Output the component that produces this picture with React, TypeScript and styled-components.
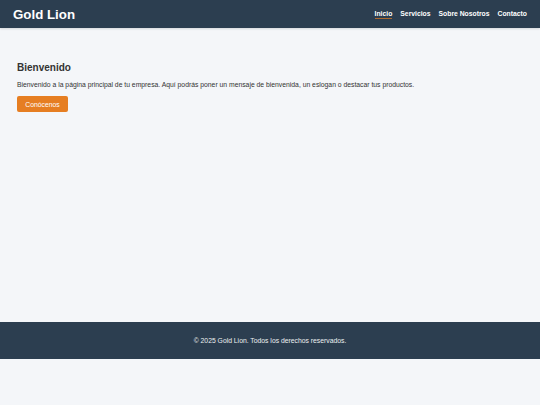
import { createGlobalStyle } from 'styled-components'
import styled from 'styled-components'

const GlobalStyle = createGlobalStyle`
  * {
    box-sizing: border-box;
  }
  body {
    margin: 0;
    background: #f4f6f9;
    font-family: 'Liberation Sans', Arial, sans-serif;
    color: #333;
  }
`

const links = ['Inicio', 'Servicios', 'Sobre Nosotros', 'Contacto']

const App = () => {
  return (
    <>
      <GlobalStyle />
      <Header>
        <Logo>Gold Lion</Logo>
        <Nav>
          {links.map((l, i) => (
            <NavLink key={l} href="#" $active={i === 0}>{l}</NavLink>
          ))}
        </Nav>
      </Header>
      <Main>
        <Title>Bienvenido</Title>
        <Text>
          Bienvenido a la página principal de tu empresa. Aquí podrás poner un mensaje de bienvenida, un eslogan o destacar tus productos.
        </Text>
        <Button>Conócenos</Button>
      </Main>
      <Footer>© 2025 Gold Lion. Todos los derechos reservados.</Footer>
    </>
  )
}

const Header = styled.header`
  height: 28px;
  background: #2c3e50;
  display: flex;
  align-items: center;
  justify-content: space-between;
  padding: 0 13px;
  box-shadow: 0 1px 2px rgba(0, 0, 0, 0.12);
`

const Logo = styled.div`
  color: #fff;
  font-weight: bold;
  font-size: 13.3px;
`

const Nav = styled.nav`
  display: flex;
  gap: 8px;
`

const NavLink = styled.a<{ $active?: boolean }>`
  color: #fff;
  text-decoration: none;
  font-weight: bold;
  font-size: 6.8px;
  padding-bottom: 1px;
  border-bottom: 1px solid ${p => (p.$active ? 'rgba(230, 126, 34, 0.7)' : 'transparent')};
`

const Main = styled.main`
  min-height: 294px;
  padding: 34px 17px;
`

const Title = styled.h2`
  margin: 0 0 8px;
  font-size: 10px;
  color: #333;
`

const Text = styled.p`
  margin: 0 0 8px;
  font-size: 6.8px;
  color: #333;
`

const Button = styled.button`
  display: block;
  width: 51px;
  height: 16px;
  padding: 0;
  border: none;
  border-radius: 2px;
  background: #e67e22;
  color: #fff;
  font-family: inherit;
  font-size: 6.8px;
`

const Footer = styled.footer`
  height: 37px;
  background: #2c3e50;
  color: #ecf0f1;
  display: flex;
  align-items: center;
  justify-content: center;
  font-size: 6.8px;
`

export default App
